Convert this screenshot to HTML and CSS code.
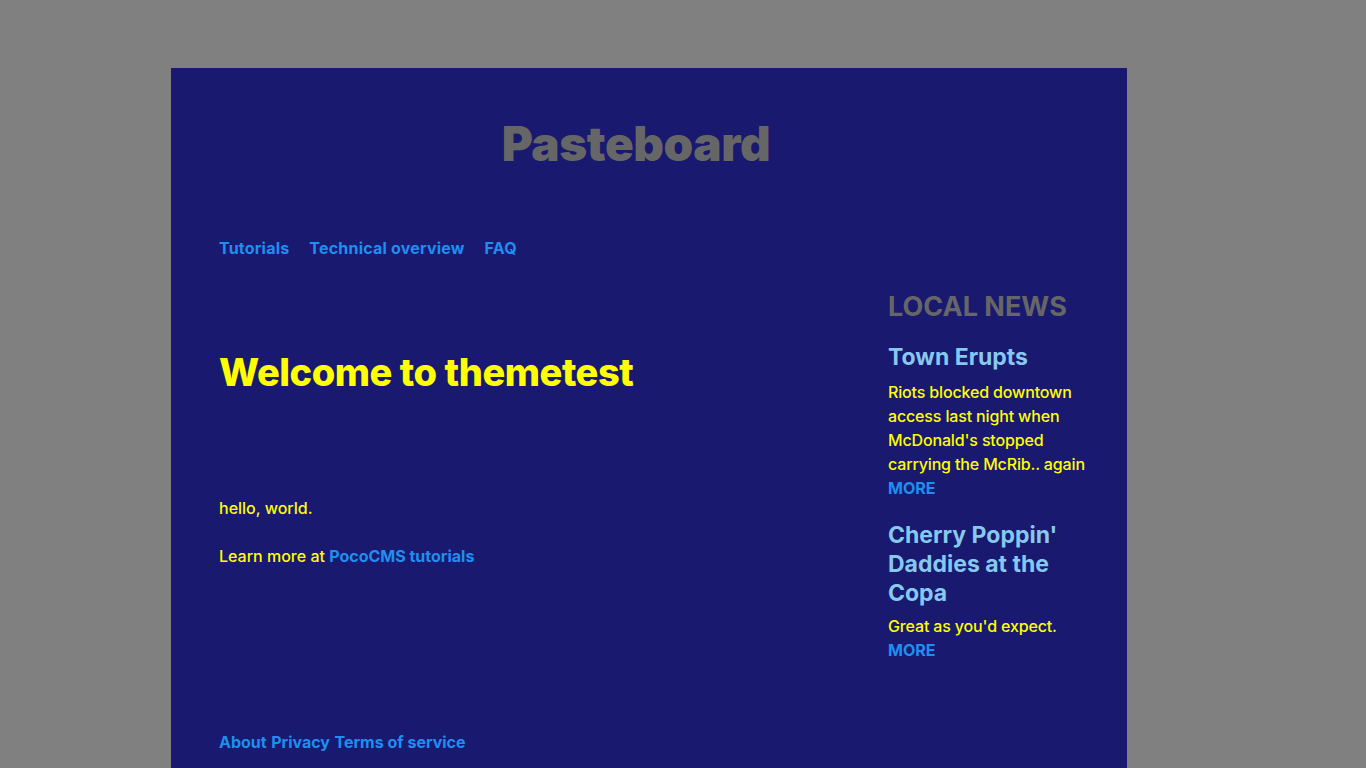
FILE: index.html
```html
<!DOCTYPE html>
<html lang="en">
<head>
<meta charset="utf-8">
<title>themetest</title>
<link rel="stylesheet" href="styles.css">
</head>
<body>
<div class="page">
  <header class="banner">
    <h1 class="site-title">Pasteboard</h1>
  </header>
  <nav class="topnav">
    <a href="#">Tutorials</a>
    <a href="#">Technical overview</a>
    <a href="#">FAQ</a>
  </nav>
  <div class="content">
    <main class="article">
      <h1 class="headline">Welcome to themetest</h1>
      <p class="para">hello, world.</p>
      <p class="para">Learn more at <a href="#">PocoCMS tutorials</a></p>
    </main>
    <aside class="sidebar">
      <h2 class="side-title">LOCAL NEWS</h2>
      <h3 class="news-title">Town Erupts</h3>
      <p class="news-text">Riots blocked downtown access last night when McDonald's stopped carrying the McRib.. again <a href="#" class="more">MORE</a></p>
      <h3 class="news-title news-next">Cherry Poppin' Daddies at the Copa</h3>
      <p class="news-text news-short">Great as you'd expect. <a href="#" class="more">MORE</a></p>
    </aside>
  </div>
  <footer class="footer">
    <a href="#">About</a> <a href="#">Privacy</a> <a href="#">Terms of service</a>
  </footer>
</div>
</body>
</html>
```
FILE: styles.css
```css
html, body {
  margin: 0;
  padding: 0;
}
body {
  background: #808080;
  font-family: Inter, "Noto Sans", sans-serif;
  color: #ffff00;
  padding-top: 68px;
}
a {
  color: #1e8ff0;
  text-decoration: none;
  font-weight: 700;
}
.page {
  width: 956px;
  margin-left: 171px;
  background: #191970;
  padding: 0 35px 0 48px;
  box-sizing: border-box;
  min-height: 720px;
}
.banner {
  padding-top: 48px;
  display: flex;
  justify-content: center;
  padding-right: 39px;
}
.site-title {
  margin: 0;
  font-size: 47.5px;
  font-weight: 900;
  color: #666666;
  line-height: 56px;
  letter-spacing: -0.4px;
}
.topnav {
  margin-top: 66px;
  display: flex;
  gap: 20px;
  font-size: 16px;
  line-height: 20px;
  letter-spacing: 0.2px;
}
.content {
  display: flex;
  margin-top: 26px;
}
.article {
  flex: 1;
}
.headline {
  margin: 64px 0 0;
  font-size: 38px;
  font-weight: 800;
  line-height: 48px;
  letter-spacing: -0.45px;
  color: #ffff00;
}
.para {
  margin: 100px 0 0;
  font-size: 16px;
  font-weight: 500;
  line-height: 24px;
}
.para + .para {
  margin-top: 24px;
}
.sidebar {
  width: 204px;
}
.side-title {
  margin: 6px 0 0;
  font-size: 27px;
  font-weight: 700;
  line-height: 34px;
  color: #666666;
}
.news-title {
  margin: 19px 0 0;
  font-size: 23px;
  font-weight: 700;
  line-height: 29px;
  color: #87c8ee;
}
.news-text {
  margin: 8px 0 0;
  font-size: 16px;
  font-weight: 500;
  line-height: 24px;
  letter-spacing: -0.15px;
}
.news-next {
  margin-top: 21px;
}
.news-short {
  margin-top: 6px;
}
.more {
  display: block;
  letter-spacing: 0;
}
.footer {
  margin-top: 68px;
  padding-bottom: 16px;
  font-size: 16px;
  line-height: 24px;
}
```
